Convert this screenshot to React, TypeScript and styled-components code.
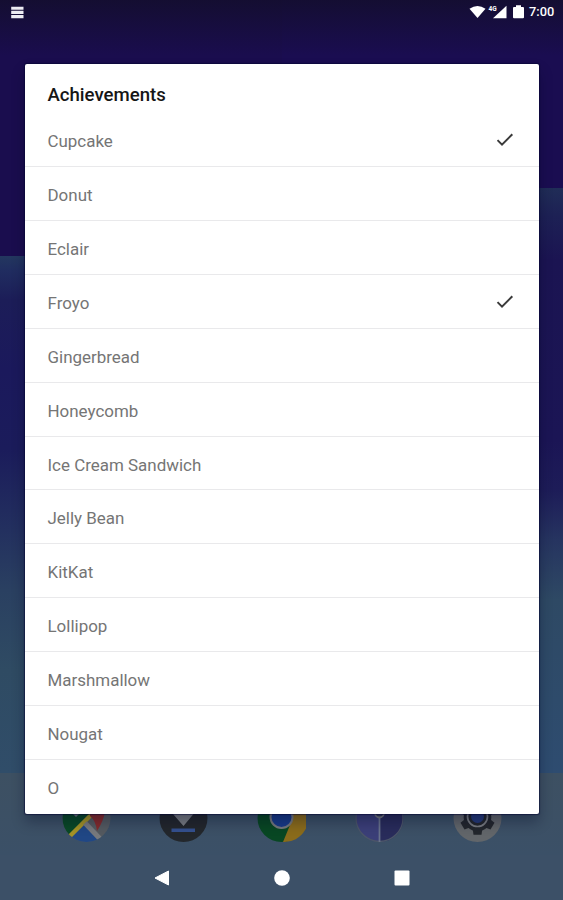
import React from "react";
import styled, { createGlobalStyle } from "styled-components";

const GlobalStyle = createGlobalStyle`
  * { box-sizing: border-box; }
  body { margin: 0; font-family: Roboto, sans-serif; }
`;

const Screen = styled.div`
  position: relative;
  display: flex;
  flex-direction: column;
  width: 563px;
  height: 900px;
  overflow: hidden;
  background:
    linear-gradient(rgba(18, 14, 40, 0.75), rgba(18, 14, 40, 0) 56px),
    linear-gradient(#1a0d4e 0 256px, #23375f 256px, #202d60 270px, #1c1d58 300px,
      #1b195c 370px, #1b1c5b 450px, #23305f 530px, #2a4061 590px, #2f4b63 670px, #304d69 773px)
      left / 282px 100% no-repeat,
    linear-gradient(#1a0d51 0 188px, #202d57 188px, #1d2155 215px, #1b1452 260px,
      #1b1555 440px, #1d1c58 490px, #263460 540px, #2e4964 600px, #2e4b6b 700px, #2e4c70 773px)
      right / 281px 100% no-repeat;
`;

const StatusBar = styled.header`
  display: flex;
  align-items: center;
  justify-content: space-between;
  height: 24px;
  padding: 0 7px 0 10px;
  color: #fff;
`;

const StatusIcons = styled.div`
  display: flex;
  align-items: center;
`;

const Clock = styled.span`
  width: 27px;
  margin-left: 4px;
  font-size: 12.8px;
  font-weight: 500;
  line-height: 24px;
  white-space: nowrap;
`;

const Dock = styled.div`
  display: grid;
  grid-template-columns: repeat(5, 49px);
  column-gap: 48.8px;
  align-content: start;
  height: 82px;
  margin-top: auto;
  padding: 20px 0 0 61.5px;
  background: linear-gradient(#3d5062, #3b5067);
`;

const NavBar = styled.nav`
  display: grid;
  grid-template-columns: repeat(3, 120px);
  justify-content: center;
  justify-items: center;
  height: 45px;
  padding-top: 14px;
  background: #3c5067;
`;

const Dialog = styled.section`
  position: absolute;
  top: 64px;
  left: 25px;
  width: 513.5px;
  height: 750px;
  overflow: hidden;
  border-radius: 2px;
  background: #fff;
  box-shadow: 0 0 1px 1px rgba(4, 5, 50, 0.55), 0 8px 14px rgba(0, 5, 35, 0.32);
`;

const Title = styled.h1`
  height: 49px;
  margin: 0;
  padding: 19px 0 0 22.5px;
  color: #161616;
  font-size: 18.6px;
  font-weight: 500;
  line-height: 24px;
`;

const List = styled.ul`
  margin: 0;
  padding: 0;
  list-style: none;
`;

const Row = styled.li`
  display: flex;
  align-items: flex-start;
  justify-content: space-between;
  height: 53.93px;
  padding: 16px 25px 0 22.5px;
  border-bottom: 1.5px solid #e9e9eb;
  color: #757575;
  font-size: 16.95px;
  line-height: 24px;

  &:last-child { border-bottom: 0; }
`;

const CheckMark = styled.svg`
  margin-top: 4px;
`;

const versions = [
  { name: "Cupcake", done: true },
  { name: "Donut", done: false },
  { name: "Eclair", done: false },
  { name: "Froyo", done: true },
  { name: "Gingerbread", done: false },
  { name: "Honeycomb", done: false },
  { name: "Ice Cream Sandwich", done: false },
  { name: "Jelly Bean", done: false },
  { name: "KitKat", done: false },
  { name: "Lollipop", done: false },
  { name: "Marshmallow", done: false },
  { name: "Nougat", done: false },
  { name: "O", done: false },
];

const Check = () => (
  <CheckMark width="18" height="14" viewBox="0 0 18 14">
    <path d="M1.5 7.1 6 11.6 16.3 1.3" fill="none" stroke="#3a3a3a" strokeWidth="2" />
  </CheckMark>
);

const MenuIcon = () => (
  <svg width="14" height="13" viewBox="0 0 14 13">
    <path d="M1.2 2.2h12.3M1.2 6.4h12.3M1.2 10.6h12.3" stroke="#ececf2" strokeWidth="3.1" />
  </svg>
);

const Signals = () => (
  <svg width="56" height="18" viewBox="0 0 56 18" fill="#fff">
    <path d="M.5 5.8Q8.5 0 16.5 5.8L8.5 15z" />
    <path d="M24 15.2 37.500 2.700V15.200z" />
    <text x="19.5" y="7.8" fontFamily="Roboto" fontSize="6.5" fontWeight="700">4G</text>
    <path d="M45 4h2V2.200h5V4h2q1 0 1 1v9.200q0 1-1 1h-9q-1 0-1-1V5q0-1 1-1z" />
  </svg>
);

const MapsIcon = () => (
  <svg width="49" height="50" viewBox="0 0 49 50">
    <defs><clipPath id="maps"><circle cx="24.5" cy="25" r="24" /></clipPath></defs>
    <g clipPath="url(#maps)">
      <path fill="#545a60" d="M0 0h49v50H0z" />
      <path fill="#0a4927" d="M0 0h26L31 18 7 42H0z" />
      <path fill="#204785" d="M5 47 22 30 42 50H5z" />
      <path stroke="#a49326" strokeWidth="4.5" d="M5 46 32 19" />
      <path stroke="#77797d" strokeWidth="5" d="M23 30 41 49" />
      <path fill="#842b2d" d="M28 18h15q-1 9-8 20-1-10-7-15z" />
      <path fill="#6d747c" d="M10 20h8l-4 4z" />
    </g>
  </svg>
);

const DownloadIcon = () => (
  <svg width="49" height="50" viewBox="0 0 49 50">
    <circle cx="24.5" cy="25" r="24" fill="#23272c" />
    <path fill="#777b80" d="M16 9h17v12h1.5L24.5 33 14 21h2z" />
    <path fill="#34508e" d="M12.500 35.500h23.500v3.500H12.500z" />
  </svg>
);

const ChromeIcon = () => (
  <svg width="49" height="50" viewBox="0 0 49 50">
    <circle cx="24.5" cy="25" r="24" fill="#084723" />
    <path fill="#8a6b1b" d="M34 12h13.500a24 24 0 0 1-21.500 37l7-17z" />
    <circle cx="24.5" cy="24" r="12" fill="#74777c" />
    <circle cx="24.5" cy="24" r="10" fill="#183a87" />
  </svg>
);

const PrismIcon = () => (
  <svg width="49" height="50" viewBox="0 0 49 50">
    <circle cx="24.5" cy="25" r="24" fill="#3b3f78" />
    <path fill="#292c5b" d="M24.500 1a24 24 0 0 1 0 48z" />
    <circle cx="24.5" cy="25" r="23.5" fill="none" stroke="#4b5668" strokeWidth="1.4" />
    <path d="M24.500 23v26" stroke="#68728b" strokeWidth="1.8" />
    <circle cx="24.5" cy="20" r="4.500" fill="#333957" stroke="#74777c" strokeWidth="1.8" />
  </svg>
);

const teeth = [0, 60, 120, 180, 240, 300];
const SettingsIcon = () => (
  <svg width="49" height="50" viewBox="0 0 49 50">
    <circle cx="24.5" cy="25" r="24" fill="#62666a" />
    <g fill="#23272d">
      <circle cx="24.5" cy="24.5" r="13.8" />
      {teeth.map((angle) => (
        <path key={angle} d="M20.500 7.200h8l1 7h-10z" transform={`rotate(${angle} 24.5 24.5)`} />
      ))}
    </g>
    <circle cx="24.5" cy="23.5" r="10" fill="#23272d" stroke="#777b80" strokeWidth="1.7" />
    <circle cx="24.5" cy="23.5" r="6.5" fill="#263a78" />
  </svg>
);

export default function App() {
  return (
    <>
      <GlobalStyle />
      <Screen>
        <StatusBar>
          <MenuIcon />
          <StatusIcons>
            <Signals />
            <Clock>7:00</Clock>
          </StatusIcons>
        </StatusBar>
        <Dock>
          <MapsIcon />
          <DownloadIcon />
          <ChromeIcon />
          <PrismIcon />
          <SettingsIcon />
        </Dock>
        <NavBar>
          <svg width="18" height="18" viewBox="0 0 18 18"><path d="M2 9 15.500 2v14z" fill="#fff" stroke="#fff" strokeWidth="1" strokeLinejoin="round" /></svg>
          <svg width="18" height="18" viewBox="0 0 18 18"><circle cx="9" cy="9" r="7.8" fill="#fff" /></svg>
          <svg width="18" height="18" viewBox="0 0 18 18"><rect x="1.5" y="1.6" width="15" height="15" rx="1" fill="#fff" /></svg>
        </NavBar>
        <Dialog>
          <Title>Achievements</Title>
          <List>
            {versions.map(({ name, done }) => (
              <Row key={name}>
                <span>{name}</span>
                {done && <Check />}
              </Row>
            ))}
          </List>
        </Dialog>
      </Screen>
    </>
  );
}
